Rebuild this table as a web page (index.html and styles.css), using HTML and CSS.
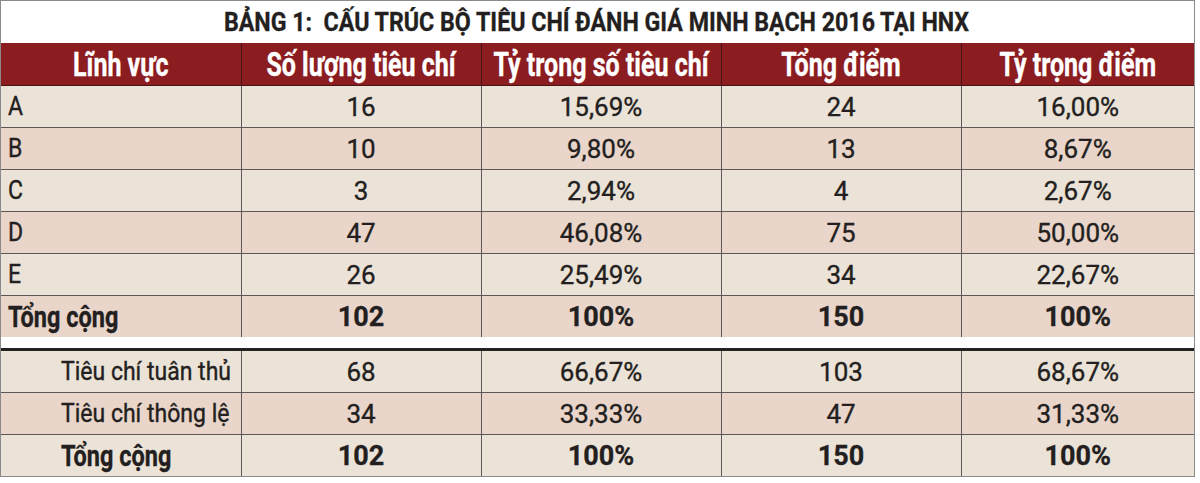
FILE: index.html
```html
<!DOCTYPE html>
<html lang="vi">
<head>
<meta charset="utf-8">
<title>Bảng 1</title>
<link rel="stylesheet" href="styles.css">
</head>
<body>
<div class="sheet">
  <div class="title"><span class="st">BẢNG 1:&nbsp; CẤU TRÚC BỘ TIÊU CHÍ ĐÁNH GIÁ MINH BẠCH 2016 TẠI HNX</span></div>
  <table class="tbl">
    <colgroup><col class="c1"><col class="c2"><col class="c3"><col class="c4"><col class="c5"></colgroup>
    <thead>
      <tr class="head">
        <th><span class="sh">Lĩnh vực</span></th>
        <th><span class="sh">Số lượng tiêu chí</span></th>
        <th><span class="sh">Tỷ trọng số tiêu chí</span></th>
        <th><span class="sh">Tổng điểm</span></th>
        <th><span class="sh">Tỷ trọng điểm</span></th>
      </tr>
    </thead>
    <tbody>
      <tr class="light"><td class="lbl"><span class="sl">A</span></td><td class="num">16</td><td class="num">15,69%</td><td class="num">24</td><td class="num">16,00%</td></tr>
      <tr class="pink"><td class="lbl"><span class="sl">B</span></td><td class="num">10</td><td class="num">9,80%</td><td class="num">13</td><td class="num">8,67%</td></tr>
      <tr class="light"><td class="lbl"><span class="sl">C</span></td><td class="num">3</td><td class="num">2,94%</td><td class="num">4</td><td class="num">2,67%</td></tr>
      <tr class="pink"><td class="lbl"><span class="sl">D</span></td><td class="num">47</td><td class="num">46,08%</td><td class="num">75</td><td class="num">50,00%</td></tr>
      <tr class="light"><td class="lbl"><span class="sl">E</span></td><td class="num">26</td><td class="num">25,49%</td><td class="num">34</td><td class="num">22,67%</td></tr>
      <tr class="pink total"><td class="lbl"><span class="sb">Tổng cộng</span></td><td class="num">102</td><td class="num">100%</td><td class="num">150</td><td class="num">100%</td></tr>
    </tbody>
  </table>
  <div class="gap"></div>
  <table class="tbl tbl2">
    <colgroup><col class="c1"><col class="c2"><col class="c3"><col class="c4"><col class="c5"></colgroup>
    <tbody>
      <tr class="light"><td class="lbl ind"><span class="sl">Tiêu chí tuân thủ</span></td><td class="num">68</td><td class="num">66,67%</td><td class="num">103</td><td class="num">68,67%</td></tr>
      <tr class="pink"><td class="lbl ind"><span class="sl">Tiêu chí thông lệ</span></td><td class="num">34</td><td class="num">33,33%</td><td class="num">47</td><td class="num">31,33%</td></tr>
      <tr class="light total"><td class="lbl ind"><span class="sb">Tổng cộng</span></td><td class="num">102</td><td class="num">100%</td><td class="num">150</td><td class="num">100%</td></tr>
    </tbody>
  </table>
</div>
</body>
</html>
```
FILE: styles.css
```css
html, body {
  margin: 0;
  padding: 0;
  background: #ffffff;
}
body {
  font-family: Roboto, "DejaVu Sans", sans-serif;
  color: #231f20;
}
.sheet {
  width: 1193px;
  border: 1px solid #8a8a8a;
  background: #ffffff;
}
.title {
  height: 42px;
  display: flex;
  align-items: center;
  justify-content: center;
  padding-right: 2px;
}
.st {
  display: inline-block;
  font-weight: 700;
  font-size: 23.2px;
  transform: scaleY(1.1);
  white-space: nowrap;
  -webkit-text-stroke: 0.3px #231f20;
}
.tbl {
  width: 1193px;
  table-layout: fixed;
  border-collapse: collapse;
  border-spacing: 0;
}
.c1 { width: 240px; }
.c2 { width: 240px; }
.c3 { width: 240px; }
.c4 { width: 240px; }
.c5 { width: 233px; }
.tbl th, .tbl td {
  padding: 0;
  border: 1px solid #5e5757;
  white-space: nowrap;
  vertical-align: middle;
}
.tbl tr > :first-child { border-left: 0; }
.tbl tr > :last-child { border-right: 0; }
.tbl tbody tr:last-child td { border-bottom: 0; }
.head th {
  height: 42px;
  background: #8b1c20;
  color: #ffffff;
  border-color: #4a1414;
  border-top: 0;
  text-align: center;
}
.sh {
  display: inline-block;
  font-weight: 700;
  font-size: 25px;
  transform: scaleY(1.35);
  -webkit-text-stroke: 0.3px #ffffff;
}
.tbl td { height: 41px; }
.light td { background: #ece3d8; }
.pink td { background: #e9d5ca; }
.tbl .num {
  text-align: center;
  font-size: 26px;
  -webkit-text-stroke: 0.35px #231f20;
}
.tbl .total .num {
  font-weight: 700;
  font-size: 27px;
  -webkit-text-stroke: 0.3px #231f20;
}
.tbl .lbl {
  text-align: left;
  padding-left: 7px;
}
.tbl .lbl.ind { padding-left: 60px; }
.sl {
  display: inline-block;
  font-size: 23px;
  transform: scaleY(1.15);
  transform-origin: left center;
  -webkit-text-stroke: 0.35px #231f20;
}
.sb {
  display: inline-block;
  font-size: 23.5px;
  font-weight: 700;
  transform: scaleY(1.22);
  transform-origin: left center;
  -webkit-text-stroke: 0.3px #231f20;
}
.gap {
  height: 11px;
}
.tbl2 tbody tr:first-child td { border-top: 3px solid #222222; }
```
